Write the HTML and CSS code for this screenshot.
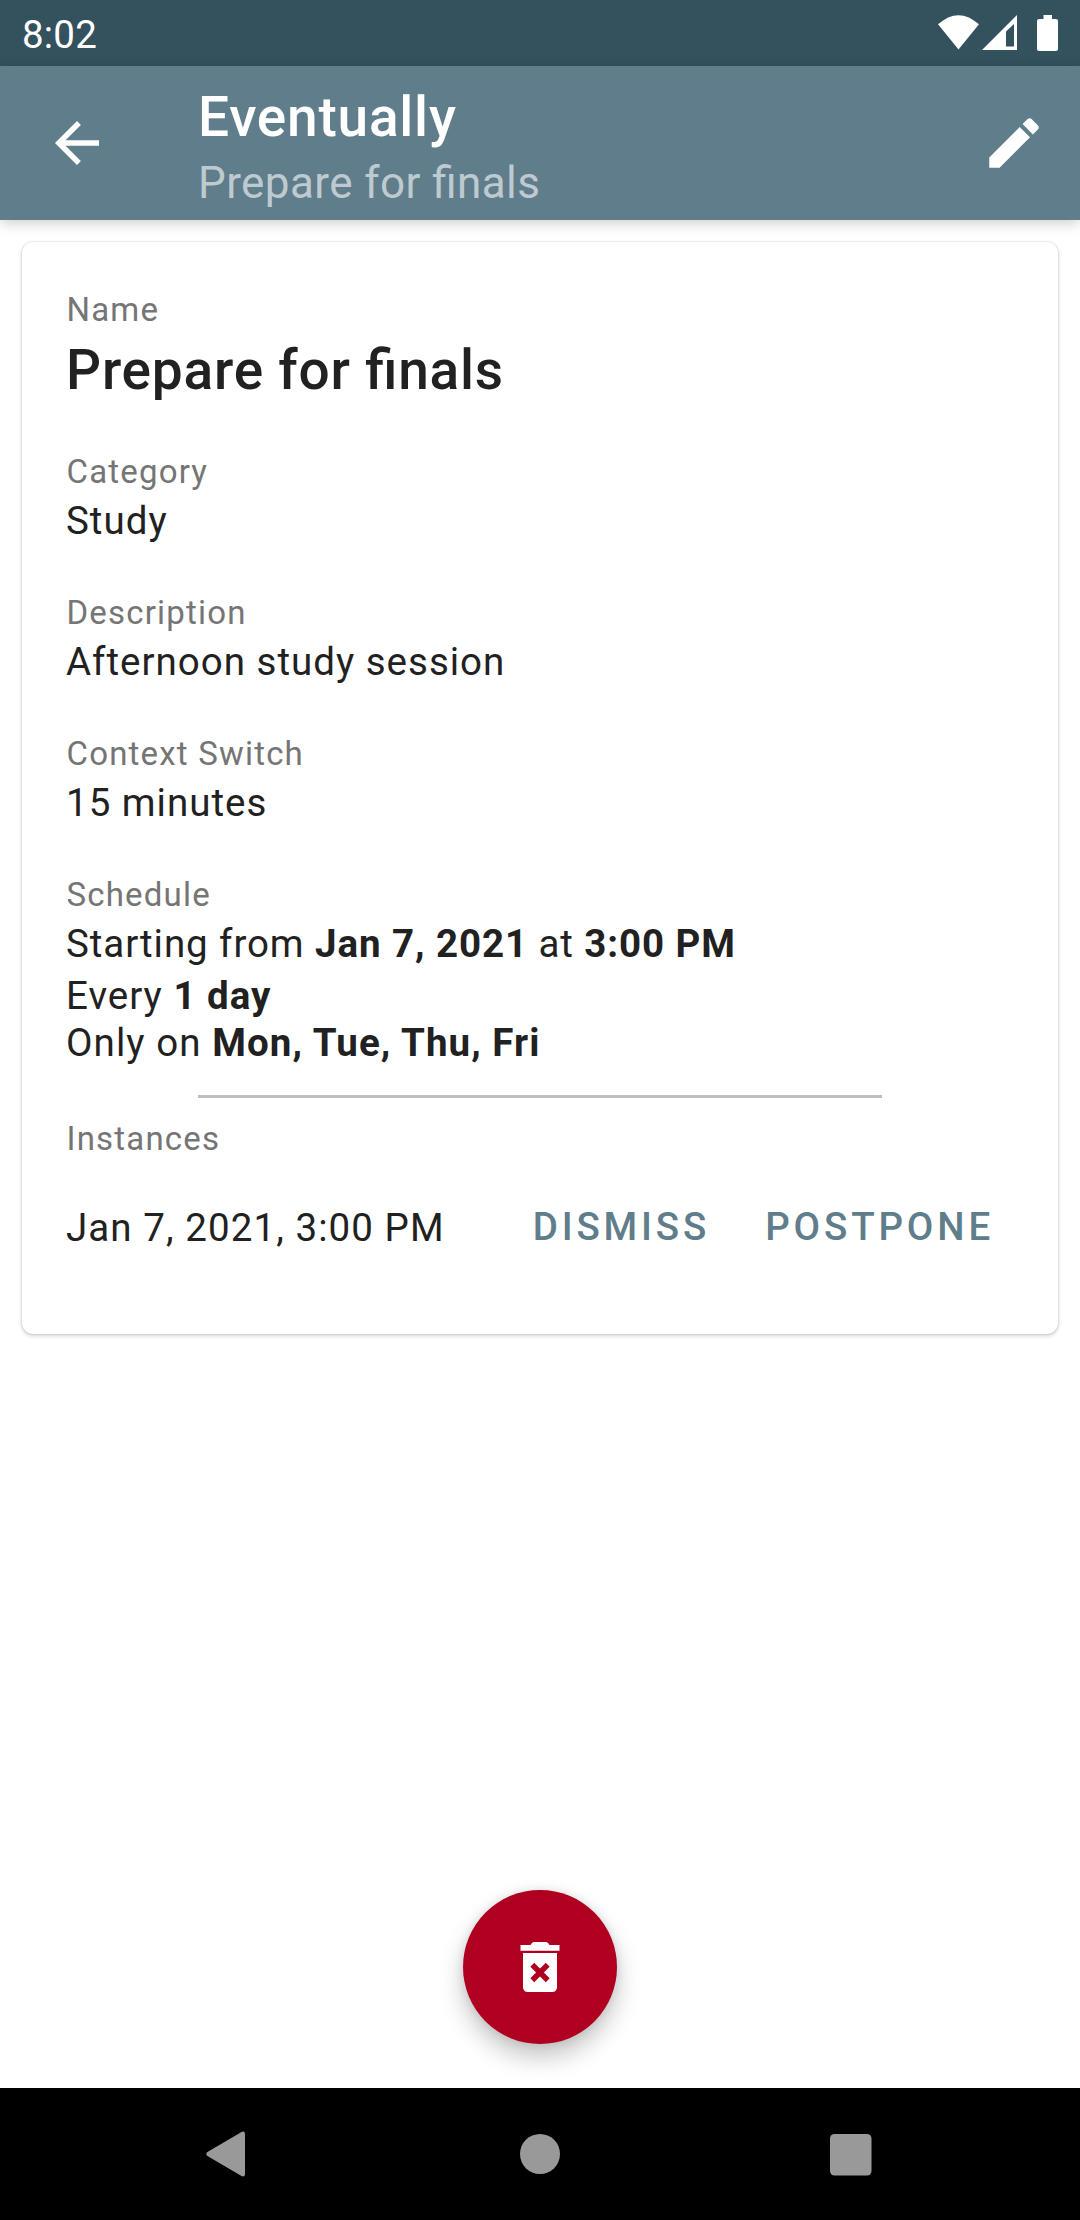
FILE: index.html
```html
<!DOCTYPE html>
<html lang="en">
<head>
<meta charset="utf-8">
<title>Eventually</title>
<link rel="stylesheet" href="styles.css">
</head>
<body>
<div class="screen">
  <div class="status-bar">
    <span class="clock">8:02</span>
    <svg class="status-icons" width="120" height="36" viewBox="0 0 120 36" fill="#fff">
      <path d="M0 9.3Q20.5-9 41 9.3L20.500 34.500z"/>
      <path fill-rule="evenodd" d="M79 0V35H44zM76 9V31.500H68V16.500z"/>
      <path d="M105.500 0h8.500v4h4q2 0 2 2v28q0 2-2 2H101q-2 0-2-2V6q0-2 2-2h4.500z"/>
    </svg>
  </div>
  <header class="app-bar">
    <svg class="icon" viewBox="0 0 24 24"><path d="M20 11H7.830l5.590-5.590L12 4l-8 8 8 8 1.410-1.410L7.830 13H20z"/></svg>
    <div class="titles">
      <h1 class="title">Eventually</h1>
      <p class="subtitle">Prepare for finals</p>
    </div>
    <svg class="icon" viewBox="0 0 24 24"><path d="M3 17.250V21h3.750L17.810 9.940l-3.750-3.750zM20.710 7.040c.39-.39.39-1.020 0-1.410l-2.340-2.340c-.39-.39-1.020-.39-1.410 0l-1.830 1.830 3.750 3.750z"/></svg>
  </header>
  <main class="content">
    <section class="card">
      <div class="field">
        <div class="label">Name</div>
        <div class="value name">Prepare for finals</div>
      </div>
      <div class="field">
        <div class="label">Category</div>
        <div class="value">Study</div>
      </div>
      <div class="field">
        <div class="label">Description</div>
        <div class="value">Afternoon study session</div>
      </div>
      <div class="field">
        <div class="label">Context Switch</div>
        <div class="value">15 minutes</div>
      </div>
      <div class="field">
        <div class="label">Schedule</div>
        <div class="value start">Starting from <b>Jan 7, 2021</b> at <b>3:00 PM</b></div>
        <div class="value">Every <b>1 day</b></div>
        <div class="value days">Only on <b>Mon, Tue, Thu, Fri</b></div>
      </div>
      <hr class="divider">
      <div class="label">Instances</div>
      <div class="instance">
        <span class="date">Jan 7, 2021, 3:00 PM</span>
        <button class="action">DISMISS</button>
        <button class="action">POSTPONE</button>
      </div>
    </section>
    <button class="fab" aria-label="Delete">
      <svg width="40" height="50" viewBox="0 0 40 50">
        <path fill="#fff" d="M.5 3H10.500Q12 0 14 0H26Q28 0 29.500 3H39.500V8.700H.5zM3 11H37V45q0 5-5 5H8q-5 0-5-5z"/>
        <path stroke="#b00020" stroke-width="5.500" d="M12.300 22.800l15.400 15.400M27.700 22.800L12.300 38.200"/>
      </svg>
    </button>
  </main>
  <nav class="nav-bar">
    <svg class="nav-icon" viewBox="0 0 66 66"><path d="M11 31.200L45.500 11q3.500-1.500 3.500 2.500V52.500q0 4-3.500 2.500L11 34.800q-1.500-1.800 0-3.600z"/></svg>
    <svg class="nav-icon" viewBox="0 0 66 66"><circle cx="33" cy="33" r="20"/></svg>
    <svg class="nav-icon" viewBox="0 0 66 66"><rect x="12" y="13" width="41.500" height="41.500" rx="4.500"/></svg>
  </nav>
</div>
</body>
</html>
```
FILE: styles.css
```css
* { box-sizing: border-box; }

body {
  margin: 0;
  background: #fff;
  font-family: Roboto, "Liberation Sans", sans-serif;
  font-feature-settings: "liga" 1;
}

.screen {
  width: 1080px;
  height: 2220px;
  display: flex;
  flex-direction: column;
}

.status-bar {
  height: 66px;
  padding: 15px 22px 0;
  display: flex;
  justify-content: space-between;
  background: #34515e;
  color: #fff;
}

.clock {
  font-size: 38.5px;
  line-height: 40px;
  letter-spacing: 0.2px;
}

.app-bar {
  height: 154px;
  padding: 0 33px 0 44px;
  display: flex;
  align-items: center;
  background: #607d8b;
  color: #fff;
  box-shadow: 0 3px 13px rgba(0, 0, 0, 0.2);
}

.icon {
  width: 66px;
  height: 66px;
  fill: #fff;
}

.titles {
  flex: 1;
  padding: 13px 0 0 88px;
}

.title {
  margin: 0;
  font-size: 55px;
  font-weight: 500;
  line-height: 66px;
  letter-spacing: 0.014em;
}

.subtitle {
  margin: 1px 0 0;
  font-size: 44px;
  line-height: 64px;
  letter-spacing: 0.0094em;
  color: rgba(255, 255, 255, 0.6);
}

.content {
  flex: 1;
  padding: 22px 22px 44px;
  display: flex;
  flex-direction: column;
  align-items: center;
  justify-content: space-between;
}

.card {
  width: 100%;
  height: 1092px;
  padding: 48px 44px 0;
  border-radius: 11px;
  box-shadow: 0 0 2px rgba(0, 0, 0, 0.2), 0 2px 4px rgba(0, 0, 0, 0.17);
}

.label {
  padding-left: 0.5px;
  font-size: 33px;
  line-height: 40px;
  letter-spacing: 0.036em;
  color: #757575;
}

.field + .field { margin-top: 49px; }

.value {
  margin-top: 6px;
  font-size: 38.5px;
  line-height: 46px;
  letter-spacing: 0.026em;
  color: #212121;
}

.value.name {
  margin: 8px 0 50px;
  font-size: 55px;
  font-weight: 500;
  line-height: 64px;
  letter-spacing: 0.0142em;
}

.field:first-child + .field { margin-top: 0; }

.value.start { letter-spacing: 0.024em; }

.value.days {
  margin-top: 1px;
  letter-spacing: 0.028em;
}

.divider {
  height: 3px;
  margin: 29px 132px 21px;
  border: 0;
  background: #bdbdbd;
}

.instance {
  height: 132px;
  margin: 2px -2px 0 0;
  display: flex;
  align-items: center;
}

.date {
  flex: 1;
  font-size: 38.5px;
  letter-spacing: 0.028em;
  color: #212121;
}

.action {
  margin-left: 11px;
  padding: 0 22px;
  border: 0;
  background: none;
  font: 500 38.5px/132px Roboto, "Liberation Sans", sans-serif;
  letter-spacing: 0.1em;
  color: #607d8b;
}

.fab {
  width: 154px;
  height: 154px;
  padding: 0;
  display: flex;
  align-items: center;
  justify-content: center;
  border: 0;
  border-radius: 50%;
  background: #b00020;
  box-shadow: 0 13px 24px rgba(0, 0, 0, 0.23), 0 0 10px rgba(0, 0, 0, 0.1);
}

.nav-bar {
  height: 132px;
  padding: 0 196px;
  display: flex;
  align-items: center;
  justify-content: space-between;
  background: #000;
}

.nav-icon {
  width: 66px;
  height: 66px;
  fill: #999;
}
```
